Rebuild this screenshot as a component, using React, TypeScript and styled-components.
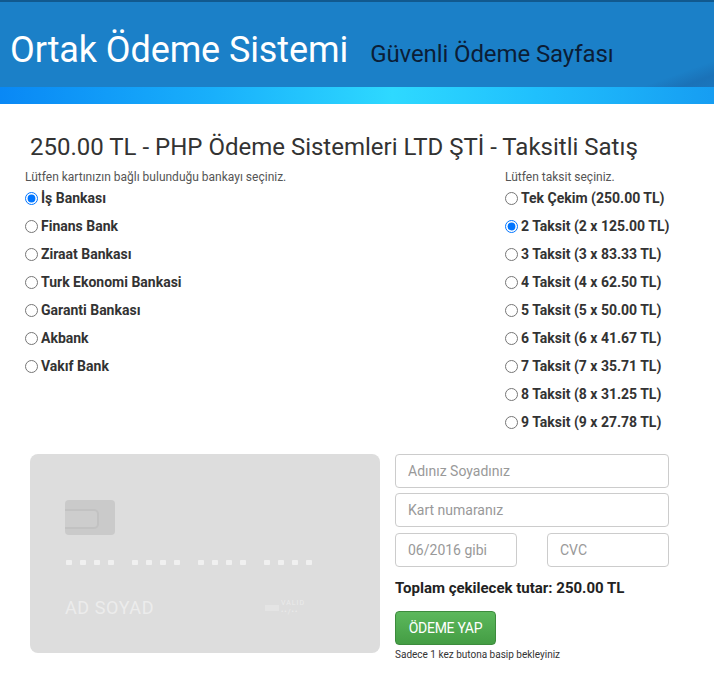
import React from 'react';
import styled, {createGlobalStyle} from "styled-components";

const GlobalStyle = createGlobalStyle`
    body {
        margin: 0;
        background: #fff;
        font-family: Roboto, "Liberation Sans", Arial, sans-serif;
        color: #333;
    }
`

const banks = ['İş Bankası', 'Finans Bank', 'Ziraat Bankası', 'Turk Ekonomi Bankasi', 'Garanti Bankası', 'Akbank', 'Vakıf Bank']

const installments = [
    'Tek Çekim (250.00 TL)',
    '2 Taksit (2 x 125.00 TL)',
    '3 Taksit (3 x 83.33 TL)',
    '4 Taksit (4 x 62.50 TL)',
    '5 Taksit (5 x 50.00 TL)',
    '6 Taksit (6 x 41.67 TL)',
    '7 Taksit (7 x 35.71 TL)',
    '8 Taksit (8 x 31.25 TL)',
    '9 Taksit (9 x 27.78 TL)',
]

export default function App() {
    return (
        <>
            <GlobalStyle/>
            <Header>
                <HeaderInner>
                    <Brand>Ortak Ödeme Sistemi</Brand>
                    <Tagline>Güvenli Ödeme Sayfası</Tagline>
                </HeaderInner>
                <GlowBar/>
            </Header>

            <Main>
                <Heading>250.00 TL - PHP Ödeme Sistemleri LTD ŞTİ - Taksitli Satış</Heading>
                <Columns>
                    <Column>
                        <Hint>Lütfen kartınızın bağlı bulunduğu bankayı seçiniz.</Hint>
                        {banks.map((b, i) => (
                            <Option key={b}>
                                <Radio type="radio" name="bank" defaultChecked={i === 0}/>
                                {b}
                            </Option>
                        ))}
                    </Column>
                    <Column>
                        <Hint>Lütfen taksit seçiniz.</Hint>
                        {installments.map((t, i) => (
                            <Option key={t}>
                                <Radio type="radio" name="taksit" defaultChecked={i === 1}/>
                                {t}
                            </Option>
                        ))}
                    </Column>
                </Columns>

                <PayRow>
                    <Card>
                        <Chip><ChipNotch/></Chip>
                        <Digits>
                            {[0, 1, 2, 3].map(g => (
                                <DotGroup key={g}>
                                    {[0, 1, 2, 3].map(d => <Dot key={d}/>)}
                                </DotGroup>
                            ))}
                        </Digits>
                        <CardBottom>
                            <CardName>AD SOYAD</CardName>
                            <Expiry>
                                <ExpiryMark/>
                                <ExpiryText>
                                    <ExpiryLine>VALID</ExpiryLine>
                                    <ExpiryLine>••/••</ExpiryLine>
                                </ExpiryText>
                            </Expiry>
                        </CardBottom>
                    </Card>

                    <Form>
                        <Input placeholder="Adınız Soyadınız"/>
                        <Input placeholder="Kart numaranız"/>
                        <Split>
                            <Input placeholder="06/2016 gibi"/>
                            <Input placeholder="CVC"/>
                        </Split>
                        <Total>Toplam çekilecek tutar: 250.00 TL</Total>
                        <PayButton>ÖDEME YAP</PayButton>
                        <Note>Sadece 1 kez butona basip bekleyiniz</Note>
                    </Form>
                </PayRow>
            </Main>
        </>
    );
}

const Header = styled.header`
    border-top: 2px solid #11598f;
    background: linear-gradient(160deg, #1b80c8 0%, #1b80c8 88%, #1a72b8 92%, #1b7cc4 100%);
`

const HeaderInner = styled.div`
    height: 85px;
    box-sizing: border-box;
    display: flex;
    align-items: baseline;
    padding: 27px 0 0 10px;
`

const Brand = styled.h1`
    margin: 0;
    font-size: 36px;
    line-height: 42px;
    font-weight: 400;
    color: #fff;
    letter-spacing: -0.1px;
`

const Tagline = styled.span`
    margin-left: 22px;
    font-size: 24px;
    color: #0b1d36;
    letter-spacing: -0.1px;
`

const GlowBar = styled.div`
    height: 17px;
    background: linear-gradient(90deg, #0988f5 0%, #19b0fb 30%, #2ed9ff 55%, #20c0fd 75%, #169df2 100%);
`

const Main = styled.main`
    width: 644px;
    margin-left: 25px;
`

const Heading = styled.h2`
    margin: 29px 0 9px 5px;
    font-size: 24px;
    line-height: 28px;
    font-weight: 400;
    color: #333;
    white-space: nowrap;
`

const Columns = styled.div`
    display: grid;
    grid-template-columns: 480px auto;
`

const Column = styled.div`
    display: flex;
    flex-direction: column;
`

const Hint = styled.div`
    font-size: 12px;
    line-height: 14px;
    color: #555;
`

const Option = styled.label`
    display: flex;
    align-items: center;
    height: 28px;
    font-size: 14px;
    font-weight: 700;
    color: #333;
    white-space: nowrap;
`

const Radio = styled.input`
    width: 13px;
    height: 13px;
    margin: 0 3px 0 0;
`

const PayRow = styled.div`
    display: flex;
    gap: 15px;
    margin-top: 18px;
    padding-left: 5px;
`

const Card = styled.div`
    width: 350px;
    height: 199px;
    box-sizing: border-box;
    border-radius: 8px;
    background: #dddddd;
    padding: 46px 0 0 35px;
    display: flex;
    flex-direction: column;
`

const Chip = styled.div`
    width: 50px;
    height: 35px;
    border-radius: 4px;
    background: #cacaca;
    position: relative;
`

const ChipNotch = styled.div`
    position: absolute;
    left: 0;
    top: 9px;
    width: 32px;
    height: 16px;
    border-radius: 0 5px 5px 0;
    border: 2px solid #c2c2c2;
    border-left: none;
    background: #cdcdcd;
`

const Digits = styled.div`
    display: flex;
    gap: 18px;
    margin-top: 25px;
    padding-left: 1px;
`

const DotGroup = styled.div`
    display: flex;
    gap: 8px;
`

const Dot = styled.span`
    width: 6px;
    height: 5px;
    border-radius: 1px;
    background: #f0f0f0;
`

const CardBottom = styled.div`
    display: flex;
    align-items: flex-end;
    margin-top: 32px;
    width: 240px;
    justify-content: space-between;
`

const CardName = styled.span`
    font-size: 18px;
    color: #ececec;
    letter-spacing: 0.6px;
`

const Expiry = styled.div`
    display: flex;
    align-items: center;
    gap: 2px;
    margin-bottom: 1px;
`

const ExpiryMark = styled.span`
    width: 14px;
    height: 6px;
    background: #e4e4e4;
`

const ExpiryText = styled.div`
    display: flex;
    flex-direction: column;
`

const ExpiryLine = styled.span`
    font-size: 7px;
    line-height: 9px;
    color: #ebebeb;
    letter-spacing: 1px;
`

const Form = styled.div`
    width: 274px;
    display: flex;
    flex-direction: column;
    gap: 5px;
`

const Split = styled.div`
    display: flex;
    justify-content: space-between;
    margin-top: 1px;

    & > input {
        width: 122px;
    }
`

const Input = styled.input`
    box-sizing: border-box;
    height: 34px;
    width: 100%;
    padding: 0 12px;
    border: 1px solid #ccc;
    border-radius: 4px;
    font-family: Roboto, "Liberation Sans", Arial, sans-serif;
    font-size: 14px;
    color: #555;

    &::placeholder {
        color: #999;
    }
`

const Total = styled.div`
    margin-top: 6px;
    font-size: 15px;
    line-height: 20px;
    font-weight: 700;
    color: #222;
`

const PayButton = styled.button`
    margin-top: 8px;
    width: 101px;
    height: 34px;
    border: 1px solid #3d8b3d;
    border-radius: 4px;
    background: linear-gradient(#5cb85c, #449d44);
    color: #fff;
    font-family: Roboto, "Liberation Sans", Arial, sans-serif;
    font-size: 14px;
    letter-spacing: -0.3px;
    padding: 0;
`

const Note = styled.div`
    margin-top: -1px;
    font-size: 10px;
    color: #333;
`
